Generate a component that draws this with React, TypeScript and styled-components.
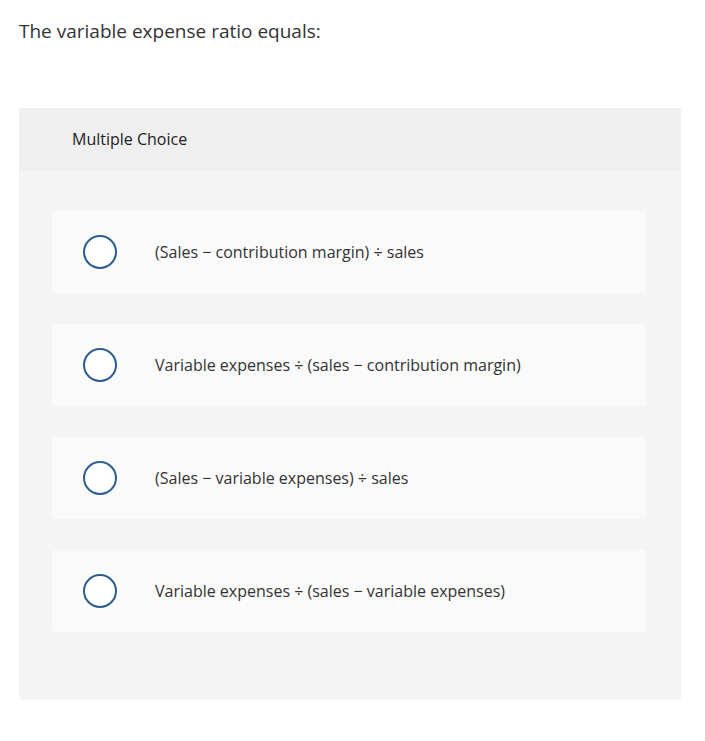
import { ReactElement } from 'react';
import styled, { createGlobalStyle } from 'styled-components';

const GlobalStyle = createGlobalStyle`
  body {
    margin: 0;
    background-color: #ffffff;
    font-family: 'Open Sans', 'Liberation Sans', sans-serif;
  }
`;

const Page = styled.div`
  padding: 19px 24px 41px 19px;
`;

const Question = styled.p`
  margin: 0;
  font-size: 19px;
  line-height: 24px;
  color: #333333;
`;

const Card = styled.div`
  margin-top: 65px;
  width: 662px;
  border-radius: 3px;
  overflow: hidden;
  background-color: #f4f4f4;
`;

const CardHeader = styled.div`
  display: flex;
  align-items: center;
  height: 62px;
  padding-left: 53px;
  padding-bottom: 1px;
  background-color: #efefef;
  font-size: 16px;
  color: #222222;
`;

const OptionList = styled.div`
  display: flex;
  flex-direction: column;
  gap: 31px;
  padding: 40px 35px 68px 33px;
`;

const Option = styled.label`
  display: flex;
  align-items: center;
  gap: 38px;
  height: 82px;
  padding-left: 31px;
  border-radius: 4px;
  background-color: #fafafa;
  cursor: pointer;
`;

const Radio = styled.span`
  box-sizing: border-box;
  width: 34px;
  height: 34px;
  border-radius: 50%;
  border: 2px solid #2c5d8f;
  background-color: #ffffff;
  flex-shrink: 0;
`;

const OptionText = styled.span`
  font-size: 16px;
  color: #333333;
`;

const options = [
  '(Sales \u2212 contribution margin) \u00f7 sales',
  'Variable expenses \u00f7 (sales \u2212 contribution margin)',
  '(Sales \u2212 variable expenses) \u00f7 sales',
  'Variable expenses \u00f7 (sales \u2212 variable expenses)',
];

function App(): ReactElement {
  return (
    <Page>
      <GlobalStyle />
      <Question>The variable expense ratio equals:</Question>
      <Card>
        <CardHeader>Multiple Choice</CardHeader>
        <OptionList>
          {options.map((text) => (
            <Option key={text}>
              <Radio />
              <OptionText>{text}</OptionText>
            </Option>
          ))}
        </OptionList>
      </Card>
    </Page>
  );
}
export default App;
